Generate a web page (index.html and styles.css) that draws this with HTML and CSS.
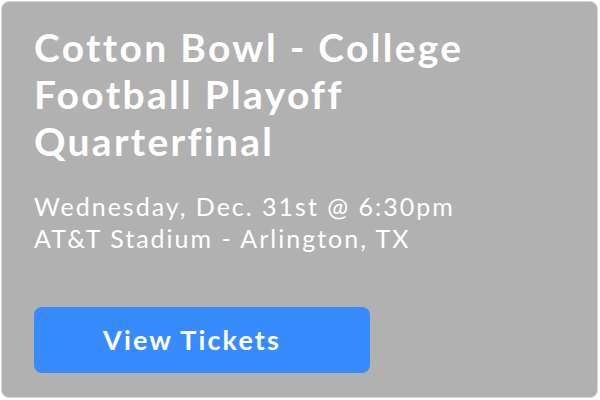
FILE: index.html
```html
<!DOCTYPE html>
<html>
<head>
<meta charset="utf-8">
<link rel="stylesheet" href="styles.css">
</head>
<body>
<div class="card">
  <h1 class="title">Cotton Bowl - College Football Playoff Quarterfinal</h1>
  <div class="details">
    <div class="line">Wednesday, Dec. 31st @ 6:30pm</div>
    <div class="line">AT&amp;T Stadium - Arlington, TX</div>
  </div>
  <button class="btn">View Tickets</button>
</div>
</body>
</html>
```

FILE: styles.css
```css
html, body {
  margin: 0;
  padding: 0;
  background: #ffffff;
}
body {
  width: 600px;
  height: 400px;
  font-family: "Lato", "Noto Sans", sans-serif;
}
.card {
  box-sizing: border-box;
  margin: 1px 0 0 1px;
  width: 597px;
  height: 397px;
  background: #b1b1b1;
  border: 1px solid #d6d6d6;
  border-radius: 8px;
  padding: 22px 32px 0 32px;
  display: flex;
  flex-direction: column;
  align-items: flex-start;
}
.title {
  margin: 0;
  color: #ffffff;
  font-size: 39px;
  font-weight: 700;
  line-height: 47px;
  letter-spacing: 2.3px;
  width: 460px;
}
.details {
  margin-top: 25px;
  color: #ffffff;
  font-size: 25px;
  line-height: 32px;
  letter-spacing: 2px;
}
.btn {
  margin-top: 53px;
  width: 336px;
  height: 66px;
  border: none;
  border-radius: 8px;
  background: #388bfd;
  color: #ffffff;
  font-family: "Lato", "Noto Sans", sans-serif;
  font-size: 27px;
  font-weight: 700;
  letter-spacing: 2.1px;
  padding: 0 20px 2px 0;
}
```
